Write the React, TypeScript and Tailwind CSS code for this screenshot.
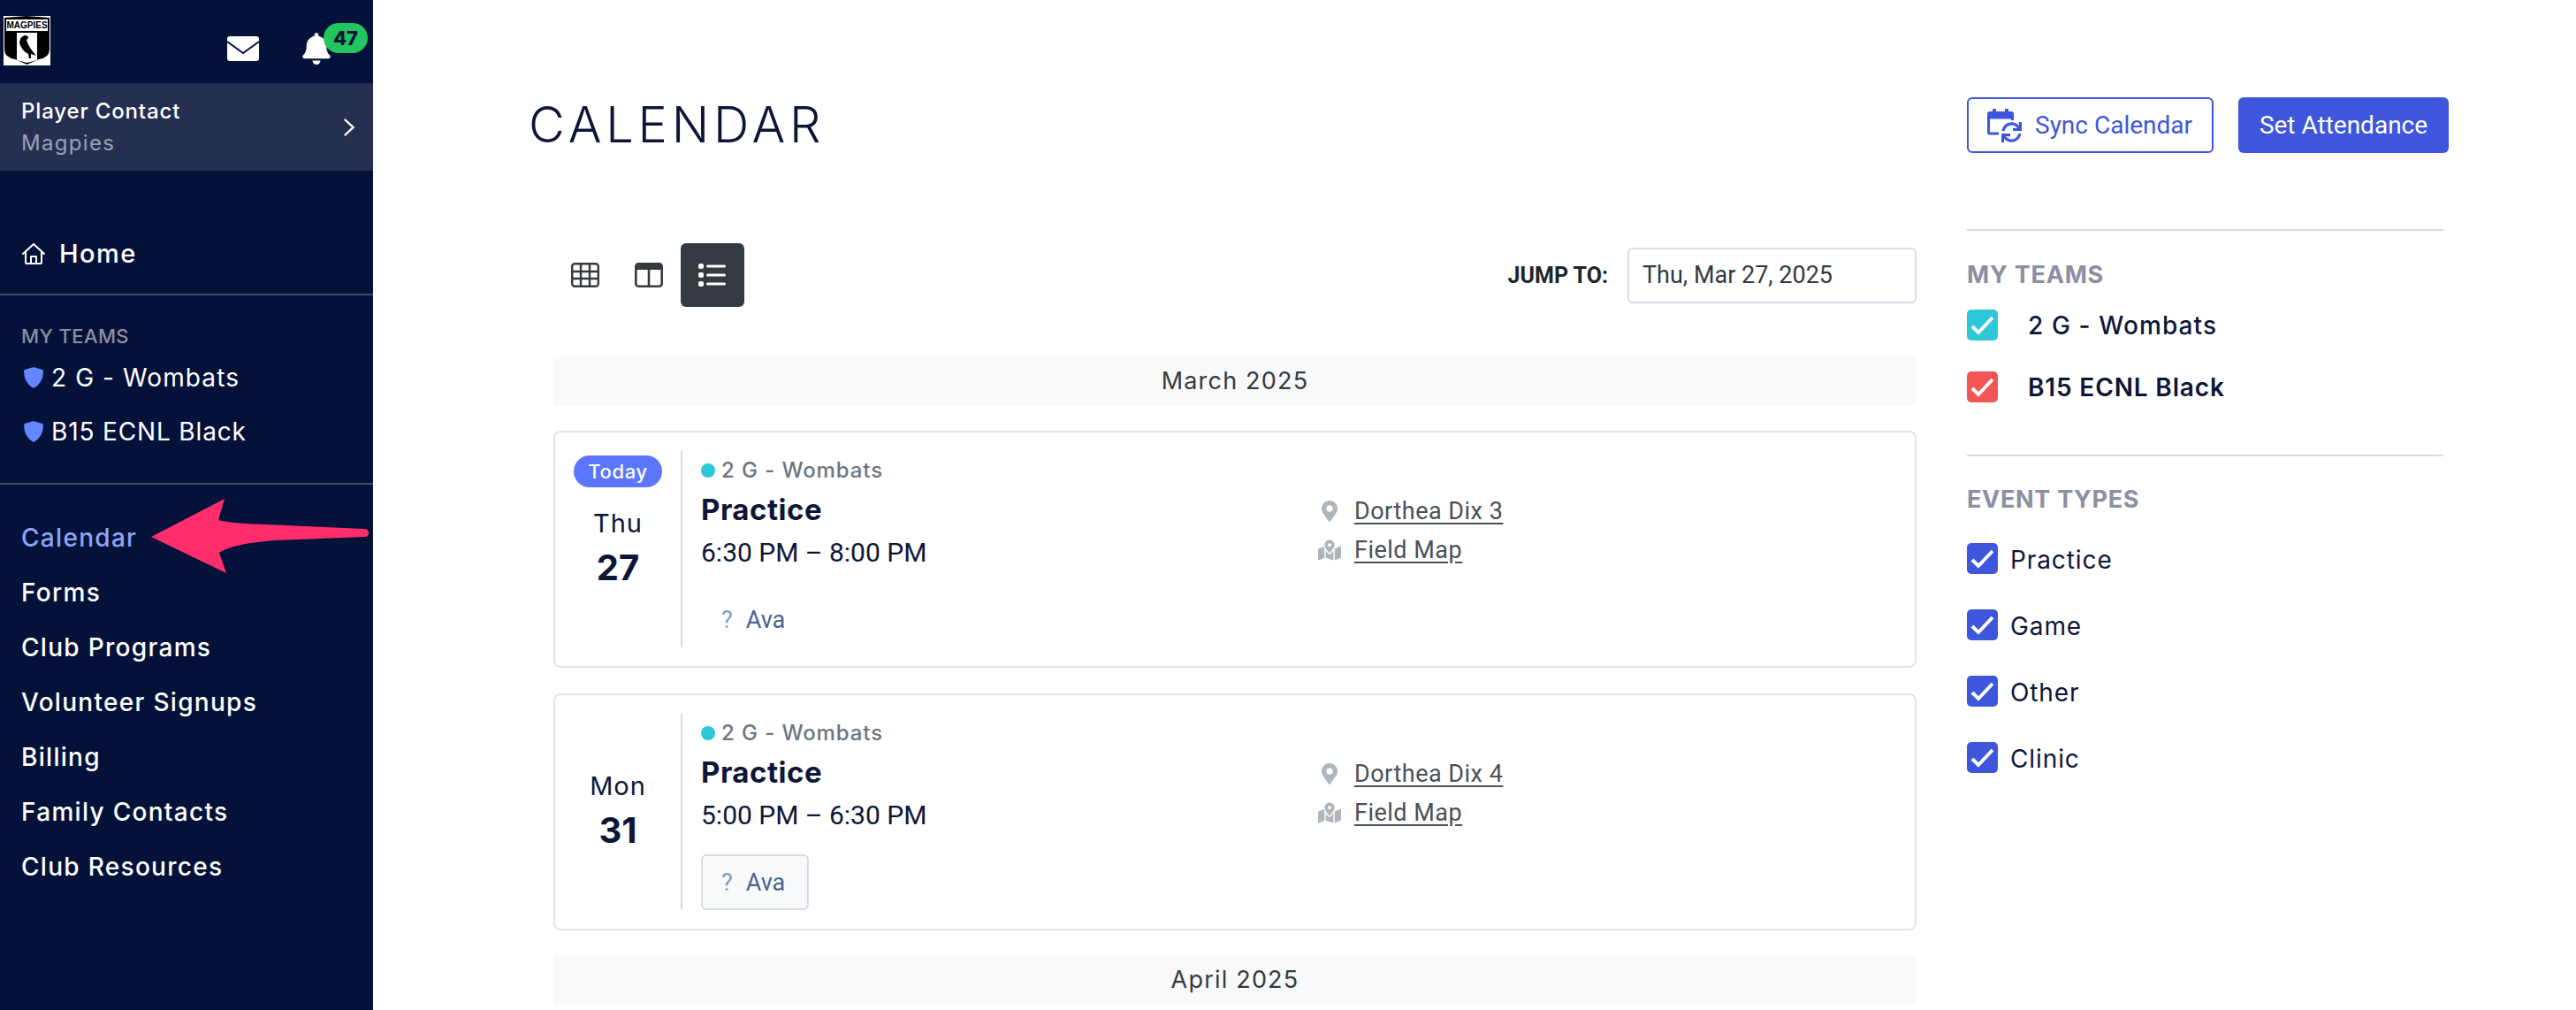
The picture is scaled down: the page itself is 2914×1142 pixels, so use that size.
import { FaBell, FaMapMarkedAlt, FaMapMarkerAlt, FaSync } from 'react-icons/fa'

const heading = "font-['Inter','Liberation_Sans',sans-serif]"
const body = "font-['Roboto','Liberation_Sans',sans-serif]"

const navItems = [
  'Calendar',
  'Forms',
  'Club Programs',
  'Volunteer Signups',
  'Billing',
  'Family Contacts',
  'Club Resources',
]

function Logo() {
  return (
    <div className="relative h-[56px] w-[53px] shrink-0 bg-white">
      <svg viewBox="0 0 53 56" className="w-[53px] h-[56px]">
        <path d="M1 2 L26 0 L52 2 V38 Q52 47 40 49 L26.500 55 L13 49 Q1 47 1 38 Z" fill="#000" />
        <rect x="3" y="4" width="47" height="13" fill="#fff" />
        <path d="M15 19 H38 V50 L26.500 53 L15 50 Z" fill="#fff" />
        <path d="M18 30 Q19 23 24 22 Q28 22 28 25 L26 27 Q28 35 37 45 L31 43 L31 48 L29 48 L28 43 Q20 39 18 30 Z" fill="#000" />
      </svg>
      <span className="absolute left-0 top-[4px] flex h-[13px] w-[53px] items-center justify-center font-['Liberation_Sans',sans-serif] text-[10px] font-bold leading-[13px] text-black">
        MAGPIES
      </span>
    </div>
  )
}

function HomeIcon() {
  return (
    <svg viewBox="0 0 26 24" className="w-[26px] h-[24px]" fill="none" stroke="#fff" strokeWidth="2" strokeLinejoin="round" strokeLinecap="round">
      <path d="M1 12 L13 1 L25 12" />
      <path d="M4 10 V22 Q4 23 5 23 H21 Q22 23 22 22 V10" />
      <path d="M10 23 V15 H16 V23" />
    </svg>
  )
}

function Shield() {
  return (
    <svg viewBox="0 0 22 24" className="w-[22px] h-[24px] shrink-0">
      <path d="M11 0 L21 3 Q22 3.500 22 4.500 Q22 18 11 24 Q0 18 0 4.500 Q0 3.500 1 3 Z" fill="#6486ff" />
    </svg>
  )
}

function Arrow() {
  return (
    <svg viewBox="0 0 422 100" className="absolute left-0 top-[556px] w-[422px] h-[100px] pointer-events-none">
      <path
        d="M171 51 L254 8 L247 32 Q262 36 300 37 L412 42 Q417 42 417 47 Q417 51 412 51 L310 55 Q262 59 248 69 L256 92 Z"
        fill="#ff2d6b"
      />
    </svg>
  )
}

function Sidebar() {
  return (
    <aside className={`relative w-[422px] shrink-0 bg-[#04123a] text-white ${heading}`}>
      <div className="relative flex h-[94px] pl-[4px] pt-[18px]">
        <Logo />
        <svg viewBox="0 0 36 28" className="ml-[200px] mt-[23px] w-[36px] h-[28px]">
          <rect width="36" height="28" rx="3" fill="#fff" />
          <path d="M0 6 L18 19 L36 6" fill="none" stroke="#04123a" strokeWidth="2" />
        </svg>
        <FaBell className="ml-[47px] mt-[19px] text-[36px]" />
        <span className="absolute left-[366px] top-[26px] flex h-[34px] w-[50px] items-center justify-center rounded-full bg-[#22c55e] text-[22px] font-extrabold text-[#04123a]">
          47
        </span>
      </div>

      <div className="flex h-[99px] items-center justify-between bg-[#252f52] pl-[24px] pr-[21px]">
        <div>
          <div className="text-[24px] font-medium leading-[36px] tracking-[0.85px]">Player Contact</div>
          <div className="text-[24px] leading-[36px] tracking-[1.3px] text-[#9aa0b2]">Magpies</div>
        </div>
        <svg viewBox="0 0 12 20" className="w-[12px] h-[20px]" fill="none" stroke="#fff" strokeWidth="2.400" strokeLinecap="round">
          <path d="M1.500 1.500 L10.500 10 L1.500 18.500" />
        </svg>
      </div>

      <div className="border-b-2 border-[#434c6b] pb-[27px] pl-[25px] pt-[76px]">
        <div className="flex h-[36px] items-center gap-[16px] text-[29px] font-medium tracking-[1.5px]">
          <HomeIcon />
          Home
        </div>
      </div>

      <div className="border-b-2 border-[#434c6b] pb-[40px] pl-[24px] pt-[32px]">
        <div className="h-[28px] text-[22px] font-medium leading-[28px] tracking-[0.4px] text-[#8a8f9f]">MY TEAMS</div>
        <div className="mt-[15px] flex h-[36px] items-center gap-[9px] pl-[3px] text-[28px] tracking-[1.1px]">
          <Shield />2 G - Wombats
        </div>
        <div className="mt-[25px] flex h-[36px] items-center gap-[9px] pl-[3px] text-[28px] tracking-[0.85px]">
          <Shield />B15 ECNL Black
        </div>
      </div>

      <nav className="flex flex-col gap-[26px] pl-[24px] pt-[42px]">
        {navItems.map((item, i) => (
          <div
            key={item}
            className={`h-[36px] text-[28px] font-medium leading-[36px] tracking-[1.3px] ${i === 0 ? 'text-[#8fa6f7]' : ''}`}
          >
            {item}
          </div>
        ))}
      </nav>

      <Arrow />
    </aside>
  )
}

function GridIcon() {
  return (
    <svg viewBox="0 0 32 28" className="w-[32px] h-[28px]" fill="none" stroke="#343a40" strokeWidth="2.400">
      <rect x="1.200" y="1.200" width="29.600" height="25.600" rx="3" />
      <path d="M11 1 V27 M21 1 V27 M1 10 H31 M1 18 H31" />
    </svg>
  )
}

function SplitIcon() {
  return (
    <svg viewBox="0 0 32 28" className="w-[32px] h-[28px]" fill="none" stroke="#343a40" strokeWidth="2.600">
      <rect x="1.300" y="1.300" width="29.400" height="25.400" rx="3" />
      <path d="M1 5 H31" strokeWidth="6" />
      <path d="M16 6 V27" />
    </svg>
  )
}

function ListIcon() {
  return (
    <svg viewBox="0 0 32 28" className="w-[32px] h-[28px]" fill="#fff">
      <rect x="0" y="1" width="6" height="6" rx="2" />
      <rect x="0" y="11" width="6" height="6" rx="2" />
      <rect x="0" y="21" width="6" height="6" rx="2" />
      <rect x="9" y="2.500" width="22" height="3" rx="1.500" />
      <rect x="9" y="12.500" width="22" height="3" rx="1.500" />
      <rect x="9" y="22.500" width="22" height="3" rx="1.500" />
    </svg>
  )
}

function MonthBar({ label }: { label: string }) {
  return (
    <div className={`flex h-[56px] items-center justify-center bg-[#f8f9fa] text-[27px] tracking-[1.2px] text-[#343a40] ${heading}`}>
      {label}
    </div>
  )
}

type EventCardProps = {
  today?: boolean
  day: string
  date: string
  time: string
  location: string
  highlighted?: boolean
}

function EventCard({ today, day, date, time, location, highlighted }: EventCardProps) {
  return (
    <div className="flex h-[268px] rounded-lg border-2 border-[#e2e4e8] py-[21px] text-[#0e1638]">
      <div className={`flex w-[142px] shrink-0 flex-col items-center pt-[5px] ${heading}`}>
        <div className="h-[36px]">
          {today && (
            <span className="flex h-[36px] w-[100px] items-center justify-center rounded-full bg-[#5b75ff] text-[22px] font-medium tracking-[0.6px] text-white">
              Today
            </span>
          )}
        </div>
        <div className="mt-[23px] h-[36px] text-[29px] leading-[36px] tracking-[1px]">{day}</div>
        <div className="mt-[10px] h-[44px] text-[40px] font-bold leading-[44px]">{date}</div>
      </div>

      <div className="flex flex-1 border-l-2 border-[#d6dce5] pl-[21px]">
        <div className="w-[697px] shrink-0 pt-[8px]">
          <div className={`flex h-[28px] items-center gap-[7px] text-[24px] font-medium tracking-[0.9px] text-[#6c757d] ${heading}`}>
            <span className="h-[16px] w-[16px] rounded-full bg-[#2ec7d9]" />2 G - Wombats
          </div>
          <div className={`mt-[10px] h-[40px] text-[33px] font-bold leading-[40px] tracking-[0.5px] ${heading}`}>Practice</div>
          <div className={`mt-[11px] h-[36px] text-[30px] leading-[36px] ${body}`}>{time}</div>
          <div
            className={`mt-[26px] flex h-[63px] w-[122px] items-center gap-[15px] rounded-md border-2 pl-[21px] pt-[2px] text-[27px] ${body} ${
              highlighted ? 'border-[#d6dce8] bg-[#f8f9fa]' : 'border-transparent'
            }`}
          >
            <span className="text-[#7e9cc4]">?</span>
            <span className="text-[#46648f]">Ava</span>
          </div>
        </div>

        <div className={`pt-[50px] text-[27px] tracking-[0.5px] text-[#495057] ${body}`}>
          <div className="flex h-[36px] items-center gap-[14px]">
            <span className="flex w-[28px] justify-center text-[24px] text-[#adb5bd]">
              <FaMapMarkerAlt />
            </span>
            <span className="underline underline-offset-4">{location}</span>
          </div>
          <div className="mt-[8px] flex h-[36px] items-center gap-[14px]">
            <span className="flex w-[28px] justify-center text-[26px] text-[#adb5bd]">
              <FaMapMarkedAlt />
            </span>
            <span className="underline underline-offset-4">Field Map</span>
          </div>
        </div>
      </div>
    </div>
  )
}

function CheckRow({ color, label, className }: { color: string; label: string; className: string }) {
  return (
    <div className={`flex h-[35px] items-center text-[#0e1638] ${heading}`}>
      <span className={`flex h-[35px] w-[35px] shrink-0 items-center justify-center rounded-[5px] ${color}`}>
        <svg viewBox="0 0 35 35" className="w-[35px] h-[35px]" fill="none" stroke="#fff" strokeWidth="4">
          <path d="M6 19 L13 26 L29 9" />
        </svg>
      </span>
      <span className={className}>{label}</span>
    </div>
  )
}

function SyncIcon() {
  return (
    <span className="relative block h-[38px] w-[40px] shrink-0">
      <svg viewBox="0 0 30 32" className="w-[30px] h-[32px]" fill="none" stroke="#3d56dc" strokeWidth="3">
        <path d="M13 28 H3 Q1.500 28 1.500 26.500 V6 Q1.500 4.500 3 4.500 H27 Q28.500 4.500 28.500 6 V13" />
        <path d="M1.500 7 H28.500 V10 H1.500 Z" fill="#3d56dc" />
        <path d="M8 0 V6 M22 0 V6" strokeWidth="4" />
      </svg>
      <FaSync className="absolute left-[16px] top-[15px] text-[23px] text-[#3d56dc]" />
    </span>
  )
}

export default function App() {
  return (
    <div className="flex h-[1142px] w-[2914px] overflow-hidden bg-white">
      <Sidebar />
      <main className="flex-1">
        <div className="flex items-center justify-between pl-[176px] pr-[144px] pt-[110px]">
          <h1 className={`text-[56px] font-light leading-[63px] tracking-[4.8px] text-[#0e1638] ${heading}`}>CALENDAR</h1>
          <div className={`flex gap-[28px] text-[28px] ${body}`}>
            <button className="flex h-[63px] w-[279px] items-center gap-[14px] whitespace-nowrap rounded-md border-2 border-[#3d56dc] pl-[21px] text-[#3d56dc]">
              <SyncIcon />
              Sync Calendar
            </button>
            <button className="h-[63px] w-[238px] whitespace-nowrap rounded-md bg-[#3d56dc] text-white">Set Attendance</button>
          </div>
        </div>

        <div className="mt-[86px] flex gap-[57px] pl-[204px]">
          <section className="w-[1542px] shrink-0 pt-[16px]">
            <div className="flex h-[72px] items-center justify-between">
              <div className="flex">
                <button className="flex h-[72px] w-[72px] items-center justify-center">
                  <GridIcon />
                </button>
                <button className="flex h-[72px] w-[72px] items-center justify-center">
                  <SplitIcon />
                </button>
                <button className="flex h-[72px] w-[72px] items-center justify-center rounded-md bg-[#343a40]">
                  <ListIcon />
                </button>
              </div>
              <div className={`flex items-center gap-[22px] text-[#343a40] ${body}`}>
                <span className="pt-[2px] text-[25px] font-bold text-[#212529]">JUMP TO:</span>
                <div className="flex h-[63px] w-[327px] items-center rounded-md border-2 border-[#d6dce8] pl-[15px] text-[27px]">
                  Thu, Mar 27, 2025
                </div>
              </div>
            </div>

            <div className="mt-[56px]">
              <MonthBar label="March 2025" />
            </div>
            <div className="mt-[28px]">
              <EventCard today day="Thu" date="27" time="6:30 PM – 8:00 PM" location="Dorthea Dix 3" />
            </div>
            <div className="mt-[29px]">
              <EventCard highlighted day="Mon" date="31" time="5:00 PM – 6:30 PM" location="Dorthea Dix 4" />
            </div>
            <div className="mt-[28px]">
              <MonthBar label="April 2025" />
            </div>
          </section>

          <section className="w-[539px] shrink-0">
            <div className="border-t-2 border-[#d6dce5] pt-[34px]">
              <div className={`h-[32px] text-[27px] font-bold leading-[32px] tracking-[0.8px] text-[#8a8fa3] ${heading}`}>MY TEAMS</div>
              <div className="mt-[23px] flex flex-col gap-[35px]">
                <CheckRow color="bg-[#2ec7d9]" label="2 G - Wombats" className="ml-[34px] text-[28px] font-medium tracking-[1.1px]" />
                <CheckRow color="bg-[#f25555]" label="B15 ECNL Black" className="ml-[34px] text-[28px] font-semibold tracking-[0.85px]" />
              </div>
            </div>

            <div className="mt-[59px] border-t-2 border-[#d6dce5] pt-[33px]">
              <div className={`h-[32px] text-[27px] font-bold leading-[32px] tracking-[0.7px] text-[#8a8fa3] ${heading}`}>EVENT TYPES</div>
              <div className="mt-[33px] flex flex-col gap-[40px]">
                {['Practice', 'Game', 'Other', 'Clinic'].map((type) => (
                  <CheckRow key={type} color="bg-[#3d56dc]" label={type} className="ml-[14px] pt-[2px] text-[28px] tracking-[0.9px]" />
                ))}
              </div>
            </div>
          </section>
        </div>
      </main>
    </div>
  )
}
